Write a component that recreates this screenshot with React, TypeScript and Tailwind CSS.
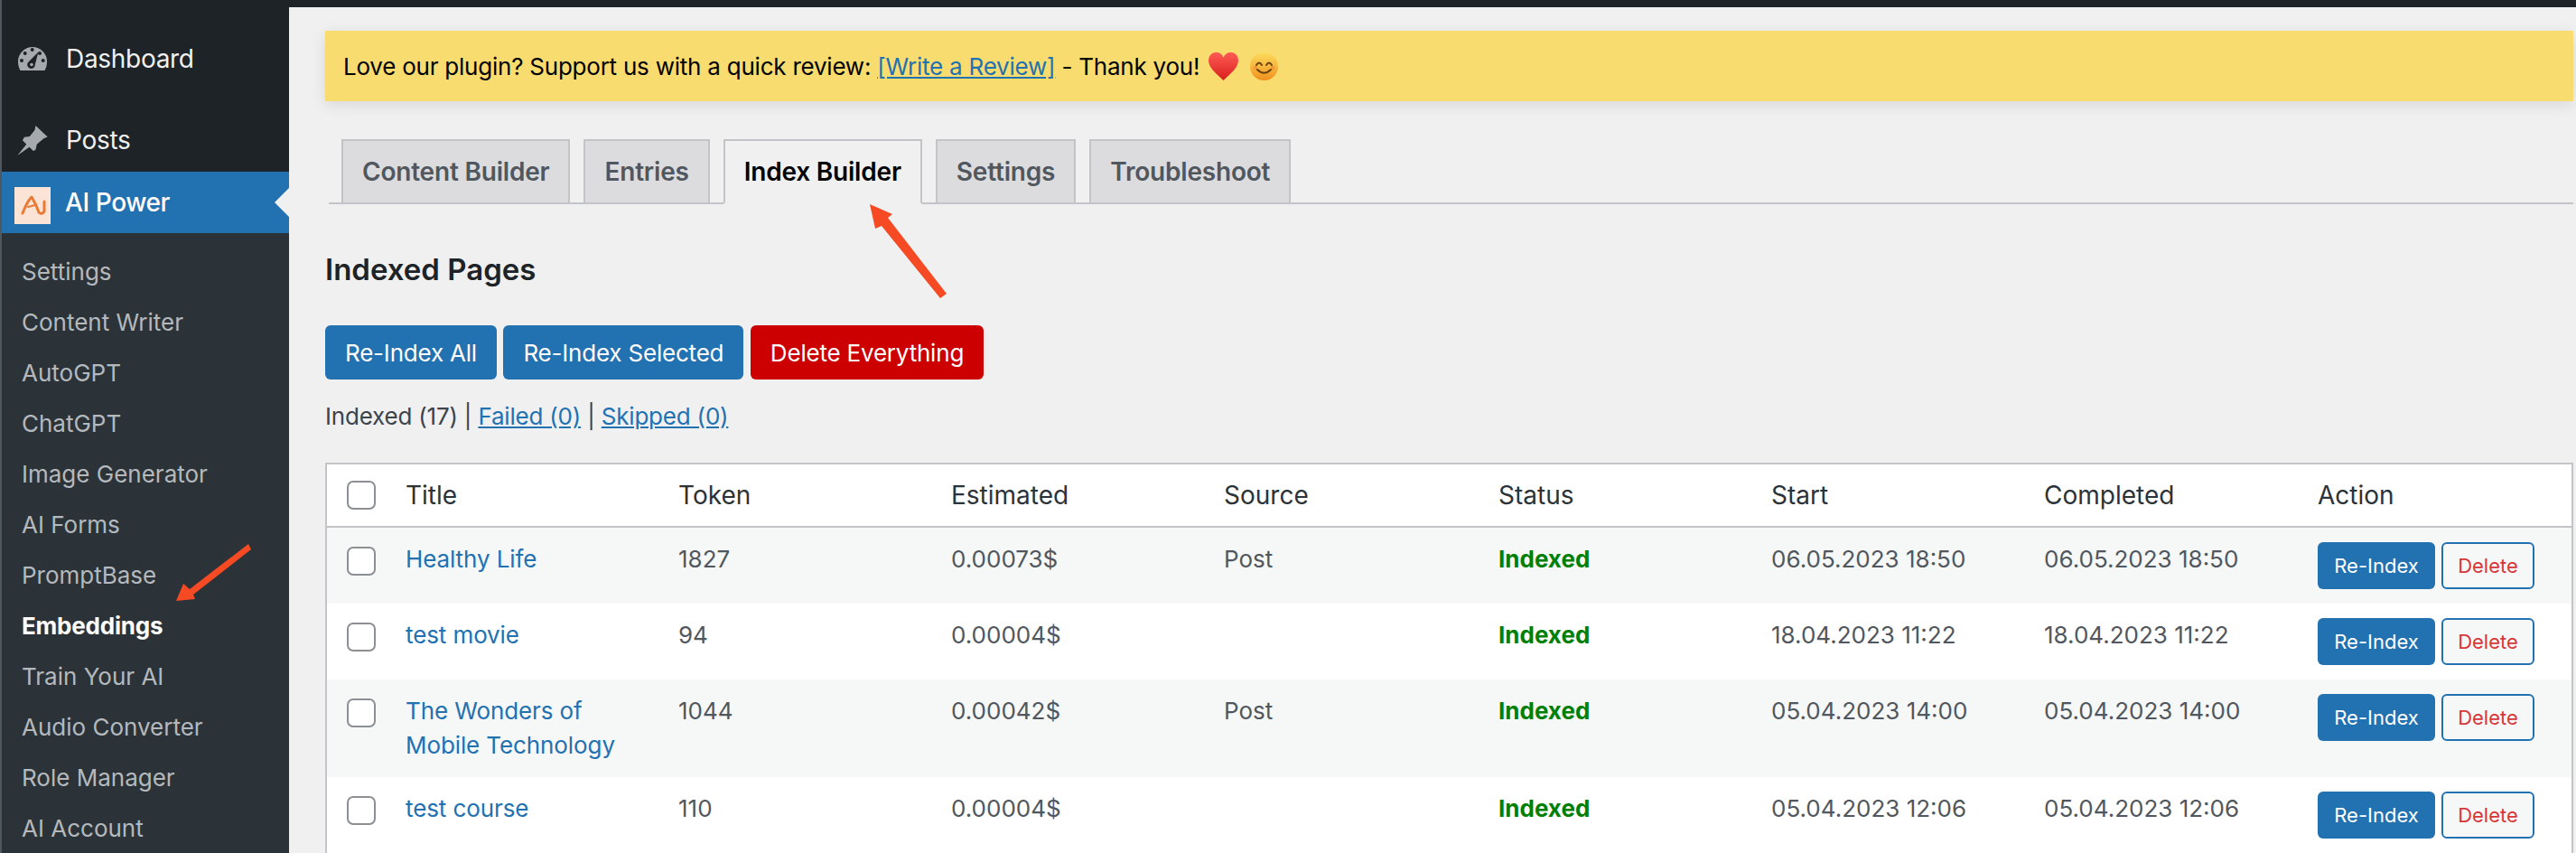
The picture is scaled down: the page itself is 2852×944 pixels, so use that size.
import type { ReactNode } from 'react'

const subMenu = [
  'Settings',
  'Content Writer',
  'AutoGPT',
  'ChatGPT',
  'Image Generator',
  'AI Forms',
  'PromptBase',
  'Embeddings',
  'Train Your AI',
  'Audio Converter',
  'Role Manager',
  'AI Account',
]

const tabs = ['Content Builder', 'Entries', 'Index Builder', 'Settings', 'Troubleshoot']

const rows = [
  { title: 'Healthy Life', token: '1827', cost: '0.00073$', source: 'Post', start: '06.05.2023 18:50', end: '06.05.2023 18:50', tint: true },
  { title: 'test movie', token: '94', cost: '0.00004$', source: '', start: '18.04.2023 11:22', end: '18.04.2023 11:22', tint: false },
  { title: 'The Wonders of Mobile Technology', token: '1044', cost: '0.00042$', source: 'Post', start: '05.04.2023 14:00', end: '05.04.2023 14:00', tint: true },
  { title: 'test course', token: '110', cost: '0.00004$', source: '', start: '05.04.2023 12:06', end: '05.04.2023 12:06', tint: false },
]

function Checkbox() {
  return <span className="block h-8 w-8 rounded-[7px] border-2 border-[#8c8f94] bg-white" />
}

function MenuItem({ icon, label, className }: { icon: ReactNode; label: string; className: string }) {
  return (
    <div className={`flex shrink-0 items-center ${className}`}>
      <span className="flex w-[71px] justify-center pr-[3px]">{icon}</span>
      <span className="text-[28px] tracking-[-0.3px] text-[#f0f0f1]">{label}</span>
    </div>
  )
}

function GaugeIcon() {
  return (
    <svg viewBox="0 0 32 26" className="h-[26px] w-[32px]">
      <path fill="#a7aaad" d="M16 0a16 16 0 0 1 16 16c0 3.800-.9 7.300-2.500 10H2.500C.9 23.300 0 19.800 0 16A16 16 0 0 1 16 0Z" />
      <g fill="#1d2327">
        <circle cx="15.700" cy="3" r="2" />
        <circle cx="7.700" cy="7" r="2" />
        <circle cx="24" cy="7" r="2" />
        <circle cx="4" cy="15" r="2" />
        <circle cx="27.700" cy="15" r="2" />
        <path d="M22.500 5.500 18.800 19.500a4.300 4.300 0 1 1-7-3.200Z" />
      </g>
      <circle cx="15" cy="19.500" r="1.800" fill="#a7aaad" />
    </svg>
  )
}

function PinIcon() {
  return (
    <svg viewBox="27 27 101 100" className="h-[33px] w-[34px]" fill="#a7aaad">
      <path d="M27 127 57 90 44 76 50 66 68 63 85 42 88 27 128 65 115 70 92 90 88 108 80 112 67 99Z" />
    </svg>
  )
}

function PluginLogo() {
  return (
    <span className="ml-[14px] mt-[7px] flex h-[41px] w-[40px] shrink-0 items-center justify-center bg-[#fbe3d5]">
      <svg viewBox="0 0 40 40" className="h-[40px] w-[40px] blur-[0.5px]" fill="none" stroke="#ea7a33" strokeWidth="3" strokeLinecap="round" strokeLinejoin="round">
        <path d="M9 28Q14 15 19 10 24 18 27 27 30 30 33 26L33 15" />
        <path d="M15 21 23 19" strokeWidth="2" />
      </svg>
    </span>
  )
}

function HeartEmoji() {
  return (
    <svg viewBox="0 0 33 31" className="h-[31px] w-[33px] shrink-0">
      <defs>
        <linearGradient id="heart" x1="0" y1="0" x2="0" y2="1">
          <stop offset="0" stopColor="#ff5a55" />
          <stop offset="1" stopColor="#d8201d" />
        </linearGradient>
      </defs>
      <path fill="url(#heart)" d="M16.500 31C8 23 0 17 0 8.500A8.500 8.500 0 0 1 16.500 5.500 8.500 8.500 0 0 1 33 8.500C33 17 25 23 16.500 31Z" />
    </svg>
  )
}

function SmileEmoji() {
  return (
    <svg viewBox="0 0 31 31" className="h-[31px] w-[31px] shrink-0">
      <defs>
        <linearGradient id="smile" x1="0" y1="0" x2="0" y2="1">
          <stop offset="0" stopColor="#fddc5c" />
          <stop offset="1" stopColor="#f0911f" />
        </linearGradient>
      </defs>
      <circle cx="15.500" cy="15.500" r="15.500" fill="url(#smile)" />
      <circle cx="6" cy="17" r="2.200" fill="#ef8a3a" opacity="0.7" />
      <circle cx="25" cy="17" r="2.200" fill="#ef8a3a" opacity="0.7" />
      <path d="M7 14q3-5 6 0M18 14q3-5 6 0M8 19q7.500 7.500 15 0" fill="none" stroke="#6b4210" strokeWidth="2" strokeLinecap="round" />
    </svg>
  )
}

export default function App() {
  return (
    <div className="relative flex h-[944px] w-[2852px] overflow-hidden bg-[#f0f0f1] font-['Inter','Liberation_Sans',sans-serif]">
      <aside className="flex w-[320px] shrink-0 flex-col border-l-2 border-[#50575e] bg-[#1d2327]">
        <MenuItem label="Dashboard" icon={<GaugeIcon />} className="mt-[20px] h-[90px]" />
        <MenuItem label="Posts" icon={<PinIcon />} className="h-[80px] pt-[10px]" />
        <div className="relative flex h-[68px] shrink-0 items-center bg-[#2271b1]">
          <PluginLogo />
          <span className="ml-[16px] text-[28px] font-medium tracking-[-0.4px] text-white">AI Power</span>
          <span className="absolute right-0 top-[18px] h-0 w-0 border-y-[16px] border-r-[16px] border-y-transparent border-r-[#f0f0f1]" />
        </div>
        <nav className="flex flex-1 flex-col bg-[#2c3338] pt-[14px]">
          {subMenu.map((item) => (
            <div
              key={item}
              className={`flex h-[56px] shrink-0 items-center pl-[22px] text-[26px] ${item === 'Embeddings' ? 'font-bold tracking-[-0.2px] text-white' : 'text-[#b4b9be]'}`}
            >
              {item}
            </div>
          ))}
        </nav>
      </aside>

      <main className="flex min-w-0 flex-1 flex-col">
        <div className="h-2 shrink-0 bg-[#1d2327]" />
        <div className="pl-[40px] pr-[3px] pt-[26px]">
          <div className="flex h-[78px] items-center bg-[#f9dc6f] pl-[20px] text-[26px] tracking-[-0.23px] text-black shadow-[0_4px_16px_rgba(0,0,0,0.1)]">
            <span>
              Love our plugin? Support us with a quick review:{' '}
              <a className="text-[#2271b1] underline">[Write a Review]</a> - Thank you!
            </span>
            <span className="ml-[10px] flex items-center gap-[13px]">
              <HeartEmoji />
              <SmileEmoji />
            </span>
          </div>

          <div className="mt-[42px] ml-[4px] flex items-end gap-[15px] border-b-2 border-[#c3c4c7] pl-[14px]">
            {tabs.map((tab) => (
              <div
                key={tab}
                className={`-mb-[2px] flex h-[72px] items-center border-2 px-[21px] text-[28px] font-semibold tracking-[-0.2px] ${
                  tab === 'Index Builder'
                    ? 'border-[#c3c4c7] border-b-[#f0f0f1] bg-[#f0f0f1] text-black'
                    : 'border-[#c3c4c7] bg-[#dcdcde] text-[#50575e]'
                }`}
              >
                {tab}
              </div>
            ))}
          </div>

          <h2 className="mt-[52px] text-[33px] font-semibold leading-[40px] text-[#1d2327]">Indexed Pages</h2>

          <div className="mt-[42px] flex gap-[7.5px] tracking-[-0.2px]">
            <button className="h-[60px] rounded-[6px] bg-[#2271b1] px-[22px] text-[26px] text-white">Re-Index All</button>
            <button className="h-[60px] rounded-[6px] bg-[#2271b1] px-[22px] text-[26px] text-white">Re-Index Selected</button>
            <button className="h-[60px] rounded-[6px] bg-[#cc0000] px-[22px] text-[26px] text-white">Delete Everything</button>
          </div>

          <p className="mt-[23px] text-[26px] leading-[36px] tracking-[-0.2px] text-[#3c434a]">
            Indexed (17) | <a className="text-[#2271b1] underline">Failed (0)</a> |{' '}
            <a className="text-[#2271b1] underline">Skipped (0)</a>
          </p>

          <table className="mt-[33px] w-full table-fixed border-2 border-[#c3c4c7] bg-white text-[26px] text-[#50575e]">
            <colgroup>
              <col className="w-[68px]" />
              <col className="w-[302px]" />
              <col className="w-[302px]" />
              <col className="w-[302px]" />
              <col className="w-[304px]" />
              <col className="w-[302px]" />
              <col className="w-[302px]" />
              <col className="w-[303px]" />
              <col />
            </colgroup>
            <thead>
              <tr className="h-[70px] border-b-2 border-[#c3c4c7] text-left text-[28px] text-[#2c3338]">
                <th className="pl-[22px] align-middle font-normal"><Checkbox /></th>
                {['Title', 'Token', 'Estimated', 'Source', 'Status', 'Start', 'Completed', 'Action'].map((head) => (
                  <th key={head} className="pl-[20px] font-normal">{head}</th>
                ))}
              </tr>
            </thead>
            <tbody>
              {rows.map((row) => (
                <tr key={row.title} className={row.tint ? 'bg-[#f6f7f7]' : 'bg-white'}>
                  <td className="pb-[16px] pl-[22px] pt-[21px] align-top"><Checkbox /></td>
                  <td className="px-[20px] pb-[16px] pt-[16px] align-top leading-[38px] tracking-[-0.1px] text-[#2271b1]">{row.title}</td>
                  <td className="pl-[20px] pt-[16px] align-top leading-[38px]">{row.token}</td>
                  <td className="pl-[20px] pt-[16px] align-top leading-[38px]">{row.cost}</td>
                  <td className="pl-[20px] pt-[16px] align-top leading-[38px]">{row.source}</td>
                  <td className="pl-[20px] pt-[16px] align-top font-bold leading-[38px] text-[#008000]">Indexed</td>
                  <td className="pl-[20px] pt-[16px] align-top leading-[38px]">{row.start}</td>
                  <td className="pl-[20px] pt-[16px] align-top leading-[38px]">{row.end}</td>
                  <td className="pb-[16px] pl-[20px] pt-[16px] align-top">
                    <div className="flex gap-[7px]">
                      <button className="h-[52px] w-[130px] rounded-[6px] bg-[#2271b1] text-[22px] text-white">Re-Index</button>
                      <button className="h-[52px] w-[103px] rounded-[6px] border-2 border-[#2271b1] bg-[#f6f7f7] text-[22px] text-[#d63638]">Delete</button>
                    </div>
                  </td>
                </tr>
              ))}
            </tbody>
          </table>
        </div>
      </main>

      {/* annotation arrows drawn over the screenshot */}
      <svg viewBox="950 220 110 120" className="absolute left-[950px] top-[220px] h-[120px] w-[110px]" fill="#f54a23">
        <polygon points="963,226 988,237 983,241 1048,325 1041,330 976,250 969,253" />
      </svg>
      <svg viewBox="190 595 95 75" className="absolute left-[190px] top-[595px] h-[75px] w-[95px]" fill="#f54a23">
        <polygon points="195,665 203,646 210,652 275,602 278,608 214,658 216,663" />
      </svg>
    </div>
  )
}
